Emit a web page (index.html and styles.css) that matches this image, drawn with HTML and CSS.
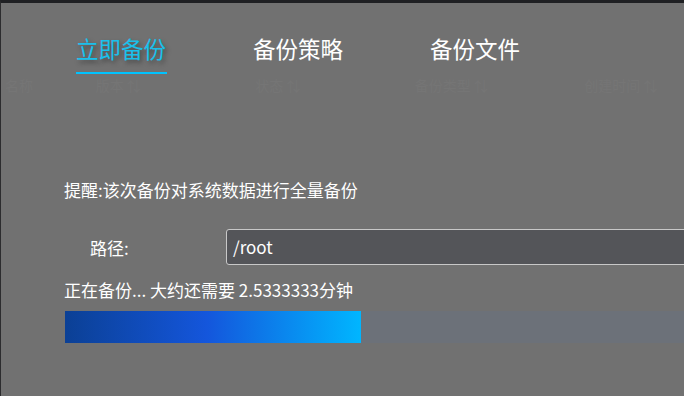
FILE: index.html
```html
<!DOCTYPE html>
<html lang="zh">
<head>
<meta charset="utf-8">
<title>备份</title>
<link rel="stylesheet" href="styles.css">
</head>
<body>
<div class="screen">
  <nav class="tabs">
    <span class="tab active">立即备份</span>
    <span class="tab">备份策略</span>
    <span class="tab">备份文件</span>
  </nav>
  <div class="ghost-row">
    <span class="g1">名称</span>
    <span class="g2">版本 ⇅</span>
    <span class="g3">状态 ⇅</span>
    <span class="g4">备份类型 ⇅</span>
    <span class="g5">创建时间 ⇅</span>
  </div>
  <main class="content">
    <p class="notice">提醒:该次备份对系统数据进行全量备份</p>
    <div class="path-row">
      <label class="path-label">路径:</label>
      <div class="path-input">/root</div>
    </div>
    <p class="status">正在备份... 大约还需要 2.5333333分钟</p>
    <div class="progress">
      <div class="progress-fill" style="width:296px"></div>
    </div>
  </main>
</div>
</body>
</html>
```

FILE: styles.css
```css
html, body {
  margin: 0;
  padding: 0;
  height: 100%;
  background: #717171;
  overflow: hidden;
}
.screen {
  box-sizing: border-box;
  height: 100vh;
  background: #717171;
  border-top: 3px solid #1f2023;
  border-left: 1px solid #2c2c2e;
  font-family: "Noto Sans CJK SC", "Noto Sans", sans-serif;
  color: #ffffff;
  overflow: hidden;
}
.tabs {
  display: flex;
  gap: 86px;
  padding: 29px 0 0 75px;
}
.tab {
  font-size: 22.5px;
  line-height: 32px;
  width: 91px;
  padding-bottom: 8px;
  border-bottom: 2px solid transparent;
  color: #ffffff;
  white-space: nowrap;
}
.tab.active {
  color: #19c0ec;
  border-bottom-color: #00c3ff;
  text-shadow: 2px 3px 4px rgba(40, 40, 40, 0.55);
}
.ghost-row {
  display: flex;
  font-size: 14px;
  line-height: 20px;
  color: #757575;
  margin-top: 1px;
  padding-left: 4px;
  white-space: nowrap;
}
.ghost-row .g1 { width: 91px; }
.ghost-row .g2 { width: 160px; }
.ghost-row .g3 { width: 160px; }
.ghost-row .g4 { width: 170px; }
.ghost-row .g5 { width: 100px; }
.content {
  padding: 83px 0 0 63px;
}
.notice {
  margin: 0;
  font-size: 17px;
  line-height: 24px;
}
.path-row {
  display: flex;
  align-items: center;
  margin-top: 27px;
}
.path-label {
  flex: none;
  width: 162px;
  box-sizing: border-box;
  padding-left: 26px;
  font-size: 17px;
}
.path-input {
  flex: none;
  width: 520px;
  height: 36px;
  box-sizing: border-box;
  background: #545559;
  border: 1px solid #c8c8c8;
  border-radius: 3px;
  padding: 0 6px;
  font-size: 17px;
  line-height: 34px;
  color: #ffffff;
}
.status {
  margin: 13px 0 0 0;
  font-size: 17px;
  line-height: 24px;
}
.progress {
  margin: 9px 0 0 1px;
  height: 32px;
  background: #6c7179;
}
.progress-fill {
  height: 100%;
  background: linear-gradient(90deg, #0b4095 0%, #1456dc 48%, #00b6ff 100%);
}
```
